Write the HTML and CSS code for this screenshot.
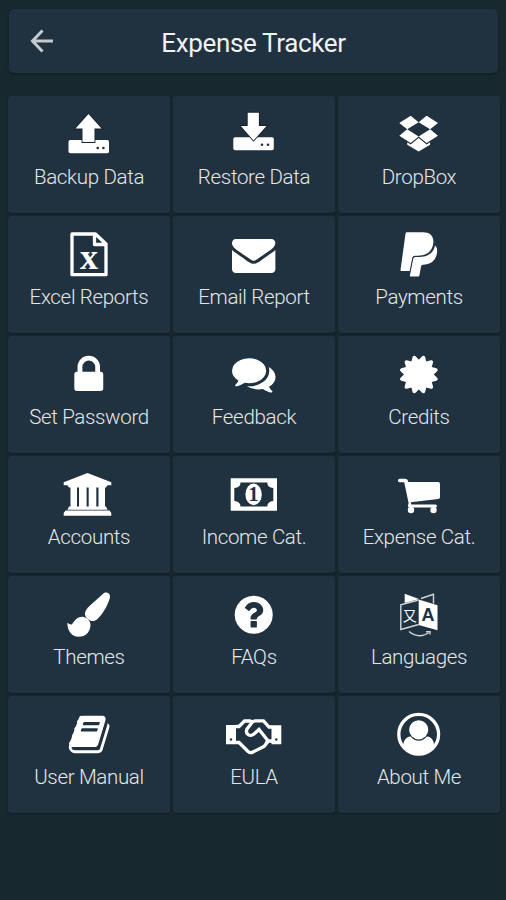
FILE: index.html
```html
<!DOCTYPE html>
<html lang="en">
<head>
    <meta charset="UTF-8">
    <meta name="viewport" content="width=device-width, initial-scale=1.0">
    <title>Expense Tracker</title>
    <link rel="stylesheet" href="styles.css">
</head>
<body>
    <header class="topbar">
        <svg class="back" viewBox="0 0 24 24"><path d="M23 12H2.500M12.500 1.500L2.500 12l10 10.500"/></svg>
        <h1>Expense Tracker</h1>
    </header>
    <main class="menu">
        <div class="menu-item">
            <svg class="icon" viewBox="0 0 60 48">
                <rect x="9.500" y="30" width="40.500" height="13.300" rx="1.800"/>
                <path class="edge" d="M29.500 4L42.500 18.500H35.500V32H23.500V18.500H16.500z"/>
                <g class="dark"><circle cx="38.700" cy="38" r="1.300"/><circle cx="44.400" cy="38" r="1.300"/></g>
            </svg>
            <span>Backup Data</span>
        </div>
        <div class="menu-item">
            <svg class="icon" viewBox="0 0 60 48">
                <rect x="9.300" y="27.200" width="40.500" height="13" rx="1.800"/>
                <path class="edge" d="M23.700 2.700H34.900V16H42.500L29.500 30.500 16.800 16H23.700z"/>
                <g class="dark"><circle cx="38" cy="34.700" r="1.300"/><circle cx="44" cy="34.700" r="1.300"/></g>
            </svg>
            <span>Restore Data</span>
        </div>
        <div class="menu-item">
            <svg class="icon" viewBox="0 0 60 48">
                <path transform="translate(8.800 .1) scale(.02325)" d="M402 829l494 305-342 285-490-319zM1388 1385v108l-490 293v1l-1-1-1 1v-1l-489-293v-108l147 96 342-284v-2l1 1 1-1v2l343 284zM554 240l342 285-494 304-338-270zM1390 829l338 271-489 319-343-285zM1239 240l489 319-338 270-494-304z"/>
            </svg>
            <span>DropBox</span>
        </div>
        <div class="menu-item">
            <svg class="icon" viewBox="0 0 60 48">
                <path class="line round" d="M13 4H36.500L47 14V44.700H13zM35.500 4V14.500H47"/>
                <text class="glyph x" x="30" y="39.300">x</text>
            </svg>
            <span>Excel Reports</span>
        </div>
        <div class="menu-item">
            <svg class="icon" viewBox="0 0 60 48">
                <path transform="translate(8 2.800) scale(.0242)" d="M1792 710v794q0 66-47 113t-113 47h-1472q-66 0-113-47t-47-113v-794q44 49 101 87 362 246 497 345 57 42 92.500 65.500t94.500 48 110 24.500h2q51 0 110-24.500t94.500-48 92.500-65.500q170-123 498-345 57-39 100-87zm0-294q0 79-49 151t-122 123q-376 261-468 325-10 7-42.500 31t-54 38.500-52 32.500-57.500 27-50 9h-2q-23 0-50-9t-57.500-27-52-32.500-54-38.500-42.500-31q-91-64-262-182.500t-205-142.500q-62-42-117-115.500t-55-136.500q0-78 41.500-130t118.500-52h1472q65 0 112.500 47t47.500 113z"/>
            </svg>
            <span>Email Report</span>
        </div>
        <div class="menu-item">
            <svg class="icon" viewBox="0 0 60 48">
                <path d="M18 2.300H34C41 2.300 45 6 44.300 13 43.300 22 37 25.700 29 25.700H26Q23.700 25.700 23.200 28L20.700 41H12.300Q11.300 41 11.500 40L16.500 3.700Q16.700 2.300 18 2.300z"/>
                <path d="M46 15.300Q48.800 18 48 23C46.500 31.500 41 34.700 34 34.700Q32.300 34.700 32 36.500L30.500 45Q30.200 46.500 29 46.500H21.700Q20.700 46.500 20.900 45.500L24.300 28.500Q24.600 27 26.500 27H30C39 27 44.800 23 46 15.300z"/>
            </svg>
            <span>Payments</span>
        </div>
        <div class="menu-item">
            <svg class="icon" viewBox="0 0 60 48">
                <path transform="translate(7.300 2.500) scale(.0251)" d="M640 768h512v-192q0-106-75-181t-181-75-181 75-75 181v192zm832 96v576q0 40-28 68t-68 28h-960q-40 0-68-28t-28-68v-576q0-40 28-68t68-28h32v-192q0-184 132-316t316-132 316 132 132 316v192h32q40 0 68 28t28 68z"/>
            </svg>
            <span>Set Password</span>
        </div>
        <div class="menu-item">
            <svg class="icon" viewBox="0 0 60 48">
                <path transform="translate(8 2.100) scale(.0243)" d="M1408 768q0 139-94 257t-256.500 186.500-353.500 68.500q-86 0-176-16-124 88-278 128-36 9-86 16h-3q-11 0-20.500-8t-11.500-21q-1-3-1-6.500t.5-6.500 2-6l2.500-5 3.500-5.500 4-5 4.500-5 4-4.500q5-6 23-25t26-29.500 22.500-29 25-38.500 20.500-44q-124-72-195-177t-71-224q0-139 94-257t256.500-186.500 353.500-68.500 353.500 68.500 256.500 186.500 94 257zm384 256q0 120-71 224.500t-195 176.500q10 24 20.500 44t25 38.500 22.500 29 26 29.500 23 25q1 1 4 4.500t4.500 5 4 5 3.500 5.500l2.500 5 2 6 .5 6.500-1 6.500q-3 14-13 22t-22 7q-50-7-86-16-154-40-278-128-90 16-176 16-271 0-472-132 58 4 88 4 161 0 309-45t264-129q125-92 192-212t67-254q0-77-23-152 129 71 204 178t75 230z"/>
            </svg>
            <span>Feedback</span>
        </div>
        <div class="menu-item">
            <svg class="icon" viewBox="0 0 60 48">
                <path transform="translate(7.900 2.550) scale(.0245)" d="M1504 896l138 135q30 28 20 70-12 41-52 51l-188 48 53 186q12 41-19 70-29 31-70 19l-186-53-48 188q-10 40-51 52-12 2-19 2-31 0-51-22l-135-138-135 138q-28 30-70 20-41-11-51-52l-48-188-186 53q-41 12-70-19-31-29-19-70l53-186-188-48q-40-10-52-51-10-42 20-70l138-135-138-135q-30-28-20-70 12-41 52-51l188-48-53-186q-12-41 19-70 29-31 70-19l186 53 48-188q10-41 51-51 41-12 70 19l135 139 135-139q29-30 70-19 41 10 51 51l48 188 186-53q41-12 70 19 31 29 19 70l-53 186 188 48q40 10 52 51 10 42-20 70z"/>
            </svg>
            <span>Credits</span>
        </div>
        <div class="menu-item">
            <svg class="icon" viewBox="0 0 60 48">
                <path d="M28.500 3L52.300 12.300V15.300H48.500L47 17.500H10L8.500 15.300H4.700V12.300zM11.500 17.500H18V37H11.500zM20 17.500H27.600V37H20zM29.700 17.500H37.300V37H29.700zM39.500 17.500H46V37H39.500zM10 36.500H47L48.500 39.800H8.500zM6.500 40.600H50.500L52.300 43V45.700H4.700V43z"/>
            </svg>
            <span>Accounts</span>
        </div>
        <div class="menu-item">
            <svg class="icon" viewBox="0 0 60 48">
                <path fill-rule="evenodd" d="M6.700 8.300H53V40.700H6.700zM16.500 12.500Q16.500 17.500 10.300 18V31Q16.500 31.500 16.500 36.500H43.300Q43.300 31.500 49.300 31V18Q43.300 17.500 43.300 12.500z"/>
                <ellipse cx="29.600" cy="24.400" rx="8.200" ry="10.800"/>
                <text class="glyph one" x="29.600" y="31">1</text>
            </svg>
            <span>Income Cat.</span>
        </div>
        <div class="menu-item">
            <svg class="icon" viewBox="0 0 60 48">
                <path d="M10.500 8.800H16.500Q18.300 8.800 18.800 10.500L19.300 12H49.300Q51 12 51 13.700V27Q51 28.800 49.300 29L21.800 32.300 22.200 34.500H46.500Q48 34.500 48 36T46.500 37.500H20.500Q18.700 37.500 18.900 35.800L19.600 33 15.200 12.200H10.500Q9 12.200 9 10.500T10.500 8.800z"/>
                <circle cx="22" cy="40" r="3.200"/><circle cx="44.500" cy="40" r="3.200"/>
            </svg>
            <span>Expense Cat.</span>
        </div>
        <div class="menu-item">
            <svg class="icon" viewBox="0 0 60 48">
                <path d="M45 3C48.500 1.500 51.800 4 50.800 8C49 15 43.500 24 39 28.500C36 31.500 33 31.500 31 30.500C28 29 25.500 26 26 23C26.500 20 28.500 18 31 15.500z"/>
                <path d="M24 26.800C28 27.500 31.500 31 31.500 35C31 42.500 26.500 46.700 19.800 46.700C12.500 46.700 8.500 41 8.300 32.700C9.500 33.500 11.500 35 13 34.300C15.500 31 18 26.500 24 26.800z"/>
            </svg>
            <span>Themes</span>
        </div>
        <div class="menu-item">
            <svg class="icon" viewBox="0 0 60 48">
                <path transform="translate(7.500 2.500) scale(.0248)" d="M1024 1376v-192q0-14-9-23t-23-9h-192q-14 0-23 9t-9 23v192q0 14 9 23t23 9h192q14 0 23-9t9-23zm256-672q0-88-55.500-163t-138.500-116-170-41q-243 0-371 213-15 24 8 42l132 100q7 6 19 6 16 0 25-12 53-68 86-92 34-24 86-24 48 0 85.500 26t37.500 59q0 38-20 61t-68 45q-63 28-115.500 86.500t-52.500 125.500v36q0 14 9 23t23 9h192q14 0 23-9t9-23q0-19 21.500-49.500t54.500-49.500q32-18 49-28.500t46-35 44.500-48 28-60.500 12.500-81zm384 192q0 209-103 385.500t-279.500 279.500-385.500 103-385.500-103-279.500-279.500-103-385.500 103-385.500 279.500-279.500 385.500-103 385.500 103 279.500 279.500 103 385.500z"/>
            </svg>
            <span>FAQs</span>
        </div>
        <div class="menu-item">
            <svg class="icon" viewBox="0 0 60 48">
                <path d="M15.700 3.700L30 9 15.700 13zM29.700 9.500L48.500 15.300V40.300L29.700 35z"/>
                <path class="thin" d="M29.700 10L11.800 14.800V39.500L29.700 34.500M32 8.500L44.500 4.300V13.500M20 41.500Q29.500 49 39.500 43M37 41.800H41V44.500"/>
                <text class="glyph han" x="20.700" y="30.500">又</text>
                <text class="glyph latin" x="38.900" y="31">A</text>
            </svg>
            <span>Languages</span>
        </div>
        <div class="menu-item">
            <svg class="icon" viewBox="0 0 60 48">
                <path transform="translate(8.200 2.600) scale(.0245)" d="M1703 478q40 57 18 129l-275 906q-19 64-76.500 107.500t-122.500 43.500h-923q-77 0-148.500-53.500t-99.500-131.500q-24-67-2-127 0-4 3-27t4-37q1-8-3-21.500t-3-19.500q2-11 8-21t16.500-23.500 16.500-23.500q23-38 45-91.500t30-91.500q3-10 .5-30t-.5-28q3-11 17-28t17-23q21-36 42-92t25-90q1-9-2.500-32t.5-28q4-13 22-30.500t22-22.500q19-26 42.500-84.500t27.500-96.500q1-8-3-25.500t-2-26.500q2-8 9-18t18-23 17-21q8-12 16.500-30.500t15-35 16-36 19.500-32 26.500-23.500 36-11.500 47.500 5.500l-1 3q38-9 51-9h761q74 0 114 56t18 130l-274 906q-36 119-71.500 153.500t-128.500 34.500h-869q-27 0-38 15-11 16-1 43 24 70 144 70h923q29 0 56-15.500t35-41.500l300-987q7-22 5-57 38 15 59 43zm-1064 2q-4 13 2 22.500t20 9.500h608q13 0 25.500-9.500t16.500-22.500l21-64q4-13-2-22.500t-20-9.500h-608q-13 0-25.500 9.500t-16.500 22.500zm-83 256q-4 13 2 22.500t20 9.500h608q13 0 25.500-9.500t16.500-22.500l21-64q4-13-2-22.500t-20-9.500h-608q-13 0-25.500 9.500t-16.500 22.500z"/>
            </svg>
            <span>User Manual</span>
        </div>
        <div class="menu-item">
            <svg class="icon" viewBox="0 0 60 48">
                <path d="M2 15H12V34.300H2zM47.500 15.300H57.300V34.300H47.500z"/>
                <path class="line" d="M12 16.500H15L20.500 11H26L28.500 12.500M12 32.500H15L24 41.500Q26.500 43.500 29 42L40 36.500 44.500 31H48M48 17H45L39.500 10.800H31.500Q29.500 10.800 28 12.500L23 19Q21.500 22.500 24 24.500Q27 26.500 30 24L35 19.500 43 29.500Q44 32.500 41 34.500"/>
                <g class="dark"><circle cx="7" cy="29.500" r="1.200"/><circle cx="52.300" cy="29.500" r="1.200"/></g>
            </svg>
            <span>EULA</span>
        </div>
        <div class="menu-item">
            <svg class="icon" viewBox="0 0 60 48">
                <circle class="line" cx="29.700" cy="24.300" r="19.900"/>
                <circle cx="29.700" cy="19.800" r="9.600"/>
                <path d="M21.500 26.500Q25 30.700 29.700 30.700T38 26.500C43 27 45 31 45.300 36.500Q39 43.500 29.700 43.500T14 36.500C14.400 31 16.500 27 21.500 26.500z"/>
            </svg>
            <span>About Me</span>
        </div>
    </main>
</body>
</html>
```
FILE: styles.css
```css
* {
    box-sizing: border-box;
}
body {
    margin: 0;
    padding: 9px 6px 0 8px;
    min-height: 900px;
    background-color: #17292f;
    font-family: Roboto, sans-serif;
    color: #fff;
}
.topbar {
    display: grid;
    grid-template-columns: 66px 1fr 66px;
    align-items: center;
    height: 64px;
    margin: 0 2px 23px 1px;
    background-color: #20313f;
    border-radius: 5px;
    box-shadow: 0 1px 3px rgba(0, 0, 0, 0.35);
}
.topbar h1 {
    margin: 0;
    padding-top: 3px;
    font-size: 26px;
    font-weight: 400;
    line-height: 32px;
    letter-spacing: -0.35px;
    text-align: center;
    white-space: nowrap;
    color: #f0f2f3;
}
.back {
    width: 24px;
    height: 24px;
    margin-left: 21px;
    fill: none;
    stroke: #c3cbd0;
    stroke-width: 3;
}
.menu {
    display: grid;
    grid-template-columns: repeat(3, 1fr);
    grid-auto-rows: 117px;
    gap: 3px;
}
.menu-item {
    display: flex;
    flex-direction: column;
    align-items: center;
    padding-top: 14px;
    background-color: #20313f;
    border-radius: 3px;
    box-shadow: 0 1px 2px rgba(0, 0, 0, 0.3);
}
.menu-item span {
    margin-top: 7px;
    font-size: 20.5px;
    font-weight: 300;
    line-height: 24px;
    letter-spacing: -0.33px;
    white-space: nowrap;
    color: #e4e7e9;
}
.icon {
    width: 60px;
    height: 48px;
    fill: #fff;
}
.icon .edge {
    stroke: #17232c;
    stroke-width: 1.8;
    paint-order: stroke;
}
.icon .dark {
    fill: #20313f;
}
.icon .line {
    fill: none;
    stroke: #fff;
    stroke-width: 3.3;
}
.icon .round {
    stroke-linejoin: round;
}
.icon .thin {
    fill: none;
    stroke: #cfd6da;
    stroke-width: 1.4;
}
.glyph {
    text-anchor: middle;
    font-weight: bold;
}
.x {
    font-family: "Liberation Serif", serif;
    font-size: 36px;
}
.one {
    font-family: "Liberation Serif", serif;
    font-size: 20px;
    fill: #20313f;
}
.han {
    font-family: "Noto Sans CJK SC", sans-serif;
    font-size: 14px;
    font-weight: 400;
}
.latin {
    font-family: "Liberation Sans", sans-serif;
    font-size: 18px;
    fill: #20313f;
}
```
